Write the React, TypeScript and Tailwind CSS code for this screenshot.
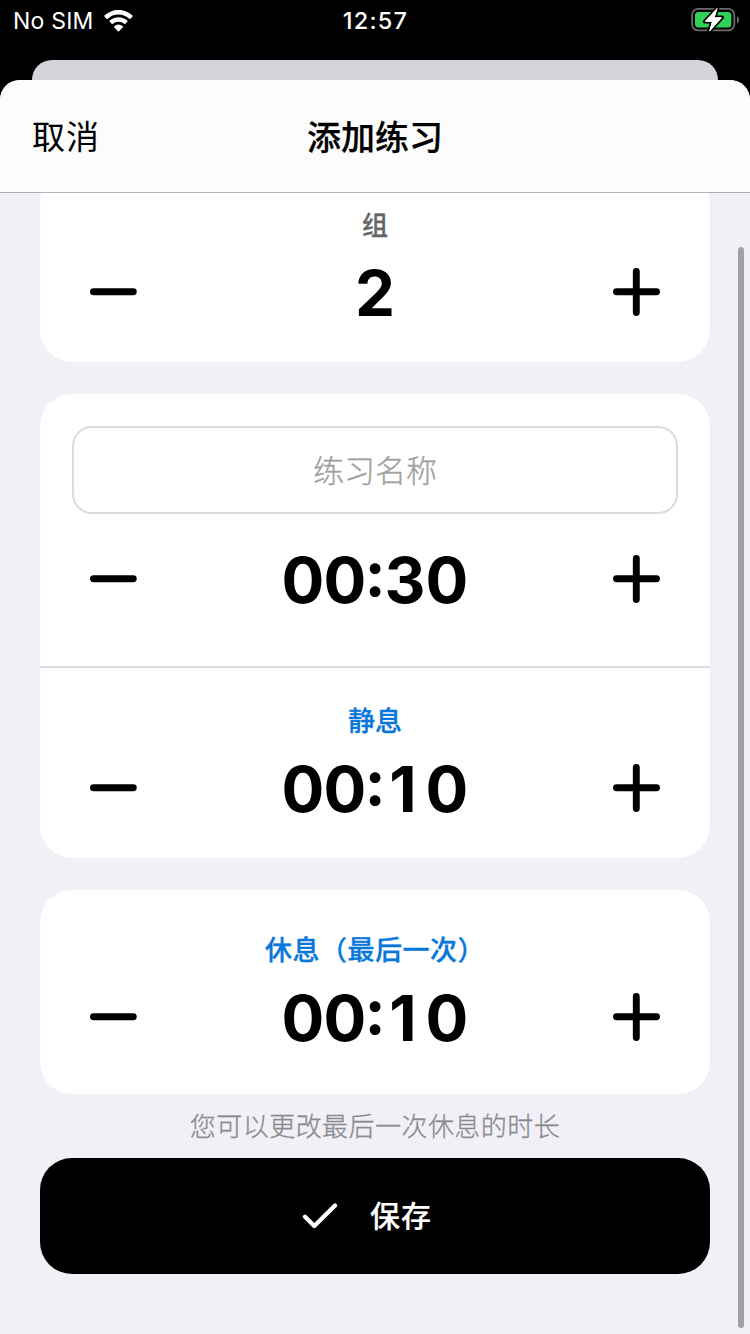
import React from 'react';

const Sign = ({ plus }: { plus?: boolean }) => (
  <svg viewBox="0 0 48 48" className="size-12 shrink-0">
    <path d={plus ? 'M3.500 23.700H43.500M23.300 3.500V44.500' : 'M4.500 23.700H44.300'} stroke="#000" strokeWidth="6.900" strokeLinecap="round" />
  </svg>
);

const glyphClass = (c: string) => {
  if (c === ':') return 'flex w-[18px] justify-center pb-[14px]';
  if (c === '1') return 'flex w-[42px] justify-center pr-[4px]';
  return 'flex w-[42px] justify-center';
};

const Stepper = ({ value }: { value: string }) => (
  <div className="flex h-12 items-center justify-between px-[49px]">
    <Sign />
    <div className="flex items-center pt-[2px] text-[63.5px] font-bold leading-none">
      {value.split('').map((c, i) => (
        <span key={i} className={glyphClass(c)}>{c}</span>
      ))}
    </div>
    <Sign plus />
  </div>
);

export default function App() {
  return (
    <div className="flex h-[1334px] w-[750px] flex-col overflow-hidden bg-black font-['Inter','Noto_Sans_CJK_SC',sans-serif] text-black">
      <div className="grid h-[60px] shrink-0 grid-cols-3 items-start px-[13px] text-[23px] leading-[42px] text-white">
        <div className="flex items-center gap-[9px]">
          <span className="tracking-[0.2px]">No SIM</span>
          <svg viewBox="0 0 30 22" className="h-[23px] w-[31px]" fill="#fff">
            <path d="M15 4.200c4.100 0 7.800 1.600 10.600 4.300.2.200.5.200.7 0l2.300-2.300c.3-.3.300-.6 0-.9A19.500 19.500 0 0 0 1.400 5.300c-.3.300-.3.600 0 .9l2.300 2.300c.2.200.5.200.7 0A15.200 15.200 0 0 1 15 4.200z" />
            <path d="M15 11.300c2.200 0 4.200.8 5.700 2.200.2.200.5.200.7 0l2.300-2.400c.3-.2.300-.6 0-.8a12.600 12.600 0 0 0-17.400 0c-.3.200-.3.600 0 .8l2.300 2.400c.2.200.5.200.7 0A8.400 8.400 0 0 1 15 11.300z" />
            <path d="M19.200 16.600c.3-.3.200-.7-.1-.9a6.300 6.300 0 0 0-8.200 0c-.3.200-.4.600-.1.900l3.700 3.900c.3.300.7.300 1 0z" />
          </svg>
        </div>
        <div className="pl-px text-center font-medium text-[23.500px] tracking-[1.200px]">12:57</div>
        <svg viewBox="0 0 50 30" className="mt-[5px] -mr-[4px] h-[30px] w-[50px] justify-self-end">
          <rect x="1.100" y="3.900" width="42.200" height="21.500" rx="6" fill="none" stroke="#6a6a6a" strokeWidth="1.800" />
          <rect x="4" y="7" width="36.300" height="15.500" rx="3.500" fill="#30d158" />
          <path d="M46 11.200c2.700 1 2.700 6 0 7z" fill="#6a6a6a" />
          <path d="M26.500 3 13.800 16.500h7.400L18.200 26.500 31 12.500h-7.500z" fill="#fff" stroke="#000" strokeWidth="4" strokeLinejoin="round" paintOrder="stroke" />
          <path d="M26 3.500 14.500 16.200h7L18.700 26 30.300 12.800h-7.200z" fill="#fff" stroke="#fff" strokeWidth="1" strokeLinejoin="round" />
        </svg>
      </div>
      <div className="mx-8 h-5 shrink-0 rounded-t-[20px] bg-[#d5d4da]" />
      <main className="flex min-h-0 flex-1 flex-col rounded-t-[20px] bg-[#f1f0f6]">
        <header className="grid h-[113px] shrink-0 grid-cols-3 items-center rounded-t-[20px] border-b border-[#b2b2b4] bg-[#fcfcfd] px-8 pt-[2px] text-[34px]">
          <div className="pt-[2px] text-[33px] tracking-[1px]">取消</div>
          <h1 className="text-center font-medium [-webkit-text-stroke:0.25px]">添加练习</h1>
        </header>
        <div className="relative flex flex-col px-10">
          <section className="h-[169px] bg-white pt-[17px] [border-radius:2px_2px_32px_32px/9px_9px_32px_32px]">
            <h2 className="text-center text-[26px] font-medium leading-8 text-[#666] [-webkit-text-stroke:0.3px]">组</h2>
            <div className="mt-[26px]"><Stepper value="2" /></div>
          </section>
          <section className="mt-8 h-[464px] rounded-[32px] bg-white">
            <div className="px-8 pt-8">
              <input aria-label="练习名称" placeholder="练习名称" className="h-[88px] w-full rounded-[20px] border-2 border-[#dcdcde] text-center text-[31px] placeholder:font-light placeholder:text-[#a0a0a0] placeholder:[-webkit-text-stroke:0.3px]" />
            </div>
            <div className="mt-[41px]"><Stepper value="00:30" /></div>
            <div className="mt-[63px] h-[2px] bg-[#dcdcde]" />
            <h2 className="mt-[38px] text-center text-[27px] font-medium leading-8 text-[#0877dc] [-webkit-text-stroke:0.3px]">静息</h2>
            <div className="mt-[26px]"><Stepper value="00:10" /></div>
          </section>
          <section className="mt-8 h-[204px] rounded-[32px] bg-white pt-[45px]">
            <h2 className="text-center text-[27px] font-medium leading-8 tracking-[0.5px] text-[#0877dc] [-webkit-text-stroke:0.3px]">休息（最后一次）</h2>
            <div className="mt-[26px]"><Stepper value="00:10" /></div>
          </section>
          <p className="h-16 pt-px text-center text-[26px] font-light leading-[64px] tracking-[0.45px] text-[#8a8a8e] [-webkit-text-stroke:0.3px]">您可以更改最后一次休息的时长</p>
          <button className="flex h-[116px] items-center justify-center gap-8 rounded-[32px] bg-black pr-4 text-[30px] font-medium tracking-[1px] text-white">
            <svg viewBox="0 0 36 28" className="h-7 w-9"><path d="M3 14.800 12.300 24 33 3.500" fill="none" stroke="#fff" strokeWidth="4.300" strokeLinecap="round" strokeLinejoin="round" /></svg>
            <span className="pt-px [-webkit-text-stroke:0.2px]">保存</span>
          </button>
          <div className="absolute right-[6px] top-[54px] h-[1081px] w-[6px] rounded-full bg-[#a0a0a5]" />
        </div>
      </main>
    </div>
  );
}
